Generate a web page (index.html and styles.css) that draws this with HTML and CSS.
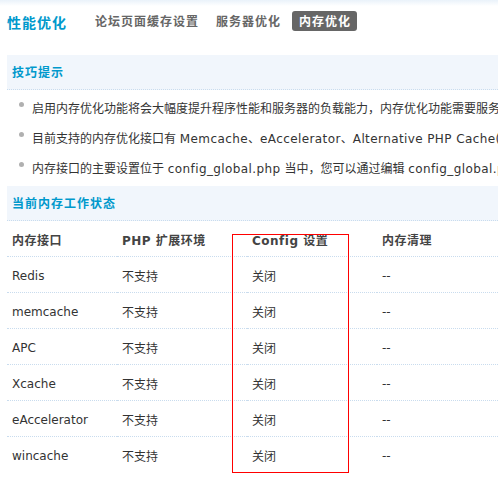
FILE: index.html
```html
<!DOCTYPE html>
<html lang="zh-CN">
<head>
<meta charset="utf-8">
<title>性能优化</title>
<link rel="stylesheet" href="styles.css">
</head>
<body>
<div class="topbar"></div>
<div class="page">
  <div class="itemtitle">
    <h3 class="title">性能优化</h3>
    <ul class="tabs">
      <li class="tab">论坛页面缓存设置</li>
      <li class="tab">服务器优化</li>
      <li class="tab tab-current">内存优化</li>
    </ul>
  </div>

  <div class="tb-head">技巧提示</div>
  <ul class="tips">
    <li class="tip"><span class="tip-text">启用内存优化功能将会大幅度提升程序性能和服务器的负载能力，内存优化功能需要服务器系统以及PHP扩展模块支持</span></li>
    <li class="tip"><span class="tip-text">目前支持的内存优化接口有 <span class="en">Memcache</span>、<span class="en">eAccelerator</span>、<span class="en">Alternative PHP Cache(APC)</span>、<span class="en">Xcache</span>、<span class="en">Redis</span>、<span class="en">WinCache</span> 六种</span></li>
    <li class="tip"><span class="tip-text">内存接口的主要设置位于 <span class="en">config_global.php</span> 当中，您可以通过编辑 <span class="en">config_global.php</span> 进行高级设置</span></li>
  </ul>

  <div class="tb-head">当前内存工作状态</div>
  <table class="status">
    <colgroup>
      <col class="c1"><col class="c2"><col class="c3"><col>
    </colgroup>
    <thead>
      <tr><th>内存接口</th><th>PHP 扩展环境</th><th>Config 设置</th><th>内存清理</th></tr>
    </thead>
    <tbody>
      <tr><td>Redis</td><td>不支持</td><td>关闭</td><td>--</td></tr>
      <tr><td>memcache</td><td>不支持</td><td>关闭</td><td>--</td></tr>
      <tr><td>APC</td><td>不支持</td><td>关闭</td><td>--</td></tr>
      <tr><td>Xcache</td><td>不支持</td><td>关闭</td><td>--</td></tr>
      <tr><td>eAccelerator</td><td>不支持</td><td>关闭</td><td>--</td></tr>
      <tr><td>wincache</td><td>不支持</td><td>关闭</td><td>--</td></tr>
    </tbody>
  </table>
</div>
<div class="highlight"></div>
</body>
</html>
```

FILE: styles.css
```css
html, body {
  margin: 0;
  padding: 0;
  background: #fff;
}
body {
  width: 498px;
  height: 481px;
  overflow: hidden;
  position: relative;
  font-family: "DejaVu Sans", "Noto Sans CJK SC", sans-serif;
  font-size: 12px;
  color: #333;
}
.topbar {
  height: 6px;
  background: linear-gradient(#eaf2fa, #ffffff);
}
.page {
  padding-left: 7px;
}
.itemtitle {
  display: flex;
  align-items: center;
  height: 20px;
  margin-top: 5px;
  margin-bottom: 24px;
}
.title {
  margin: 1px 0 0 0;
  font-size: 14px;
  font-weight: bold;
  letter-spacing: 1px;
  color: #0099cc;
  font-family: "Noto Sans CJK SC", sans-serif;
}
.tabs {
  display: flex;
  align-items: center;
  list-style: none;
  margin: 0 0 0 28px;
  padding: 0;
  gap: 17px;
}
.tab {
  font-family: "Noto Sans CJK SC", sans-serif;
  font-size: 12px;
  font-weight: bold;
  letter-spacing: 1px;
  color: #666;
  line-height: 20px;
}
.tab-current {
  margin-left: -6px;
  background: #666;
  color: #fff;
  border-radius: 3px;
  padding: 0 6px 0 7px;
}
.tb-head {
  height: 34px;
  line-height: 34px;
  padding-left: 5px;
  background: #f1f6fc;
  border-bottom: 1px dotted #c9dcee;
  font-family: "Noto Sans CJK SC", sans-serif;
  font-size: 12px;
  font-weight: bold;
  letter-spacing: 1px;
  color: #0099cc;
}
.tips {
  list-style: none;
  margin: 0 0 4px 0;
  padding: 2px 0 0 12px;
}
.tip {
  display: flex;
  align-items: center;
  gap: 8px;
  height: 30px;
  white-space: nowrap;
}
.tip::before {
  content: "";
  flex: none;
  width: 5px;
  height: 5px;
  border-radius: 50%;
  background: #b0b0b0;
  margin-bottom: 5px;
}
.tip-text {
  flex: none;
}
.en {
  letter-spacing: 0.4px;
}
.status {
  border-collapse: collapse;
  width: 491px;
  table-layout: fixed;
}
.c1 { width: 110px; }
.c2 { width: 130px; }
.c3 { width: 130px; }
.status th, .status td {
  height: 33px;
  padding: 2px 0 0 5px;
  text-align: left;
  vertical-align: middle;
  border-bottom: 1px dotted #c9dcee;
  white-space: nowrap;
}
.status th {
  font-weight: bold;
  color: #444;
  letter-spacing: 0.5px;
}
.status tbody tr:last-child td {
  border-bottom: none;
}
.highlight {
  position: absolute;
  left: 232px;
  top: 234px;
  width: 117px;
  height: 239px;
  box-sizing: border-box;
  border: 1px solid #ff0000;
}
```
